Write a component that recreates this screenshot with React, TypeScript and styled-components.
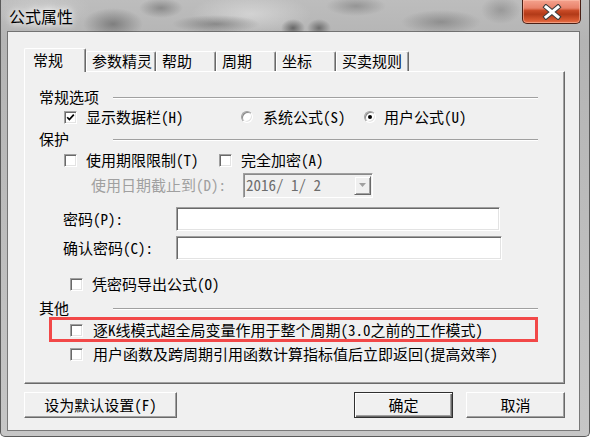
import styled, { createGlobalStyle } from "styled-components";

const FONT = `"Noto Sans Mono CJK SC", "Noto Sans CJK SC", sans-serif`;

const GlobalStyle = createGlobalStyle`
  html, body {
    margin: 0;
    padding: 0;
  }
  body {
    width: 590px;
    height: 437px;
    overflow: hidden;
    background: #fff;
  }
`;

// aero style glass frame round the dialog
const Window = styled.div`
  width: 590px;
  height: 437px;
  box-sizing: border-box;
  display: flex;
  flex-direction: column;
  padding: 0 10px 6px 7px;
  font-family: ${FONT};
  font-size: 15px;
  color: #000;
  border: 1px solid #5a5a5a;
  border-top: none;
  border-radius: 0 0 5px 5px;
  background:
    radial-gradient(ellipse 30px 16px at 112px 24px, rgba(70, 70, 70, 0.5), transparent),
    radial-gradient(ellipse 22px 10px at 160px 8px, rgba(80, 80, 80, 0.45), transparent),
    radial-gradient(ellipse 44px 9px at 215px 24px, rgba(60, 60, 60, 0.4), transparent),
    radial-gradient(ellipse 12px 9px at 292px 28px, rgba(50, 50, 50, 0.6), transparent),
    radial-gradient(ellipse 12px 9px at 318px 28px, rgba(50, 50, 50, 0.55), transparent),
    radial-gradient(ellipse 30px 10px at 355px 6px, rgba(90, 90, 90, 0.4), transparent),
    radial-gradient(ellipse 40px 12px at 440px 22px, rgba(80, 80, 80, 0.4), transparent),
    radial-gradient(ellipse 20px 14px at 500px 10px, rgba(90, 90, 90, 0.35), transparent),
    radial-gradient(ellipse 60px 20px at 250px 14px, rgba(235, 235, 235, 0.5), transparent),
    radial-gradient(ellipse 50px 20px at 40px 10px, rgba(225, 225, 225, 0.4), transparent),
    linear-gradient(#bdbdbd, #b4b4b4 40px, #c6c6c6);
`;

const TitleBar = styled.div`
  height: 32px;
  flex: none;
  display: flex;
  justify-content: space-between;
  align-items: flex-start;
`;

const Title = styled.div`
  margin: 6px 0 0 1px;
  font-family: "Noto Sans CJK SC", sans-serif;
  font-size: 16px;
  line-height: 20px;
  text-shadow: 0 0 6px #fff, 0 0 10px rgba(255, 255, 255, 0.9);
`;

const CloseButton = styled.div`
  width: 59px;
  height: 24px;
  margin-right: -2px;
  box-sizing: border-box;
  display: flex;
  align-items: center;
  justify-content: center;
  border: 1px solid #4a2016;
  border-top: none;
  border-radius: 0 0 5px 5px;
  background: linear-gradient(#f4a28e 0%, #e8826a 35%, #c84a26 46%, #b23a18 62%, #d4562e 85%, #e8724a 100%);
  box-shadow: inset 0 0 0 1px rgba(255, 200, 180, 0.5);
`;

const Client = styled.div`
  flex: 1;
  display: flex;
  flex-direction: column;
  padding: 16px 14px 0 16px;
  background: #f0f0f0;
  box-shadow: 0 0 0 1px rgba(70, 70, 70, 0.6);
`;

const TabStrip = styled.div`
  height: 23px;
  display: flex;
  align-items: flex-end;
  position: relative;
  z-index: 1;
`;

const Tab = styled.div<{ $w: number; $active?: boolean }>`
  width: ${p => p.$w}px;
  height: ${p => (p.$active ? 24 : 20)}px;
  margin-bottom: ${p => (p.$active ? -1 : 0)}px;
  box-sizing: border-box;
  padding: ${p => (p.$active ? "3px 0 0 8px" : "1px 0 0 5px")};
  line-height: 16px;
  white-space: nowrap;
  background: #f0f0f0;
  border-top: 1px solid #fff;
  border-left: 1px solid #fff;
  border-right: 1px solid #696969;
  border-radius: 2px 2px 0 0;
  box-shadow: inset -1px 0 #a0a0a0;
`;

const Panel = styled.div`
  height: 313px;
  box-sizing: border-box;
  position: relative;
  display: flex;
  flex-direction: column;
  padding-top: 17px;
  border: 1px solid;
  border-color: #fff #696969 #696969 #fff;
  box-shadow: inset -1px -1px #a0a0a0;
`;

const GroupHeader = styled.div<{ $mt: number }>`
  display: grid;
  grid-template-columns: 74px 1fr;
  align-items: center;
  height: 16px;
  line-height: 16px;
  margin: ${p => p.$mt}px 26px 0 14px;
`;

const Etch = styled.div`
  height: 0;
  margin-top: 2px;
  border-top: 1px solid #a0a0a0;
  border-bottom: 1px solid #fff;
`;

const Row = styled.div<{ $mt: number; $pl: number; $h?: number }>`
  display: flex;
  align-items: center;
  height: ${p => p.$h ?? 16}px;
  margin-top: ${p => p.$mt}px;
  padding-left: ${p => p.$pl}px;
  line-height: 16px;
  white-space: nowrap;
`;

const Option = styled.div<{ $w?: number; $gap?: number; $disabled?: boolean }>`
  display: flex;
  align-items: center;
  gap: ${p => p.$gap ?? 9}px;
  width: ${p => (p.$w ? `${p.$w}px` : "auto")};
  flex: none;
  color: ${p => (p.$disabled ? "#a0a0a0" : "#000")};
`;

const CheckBox = styled.span`
  width: 13px;
  height: 13px;
  flex: none;
  box-sizing: border-box;
  display: flex;
  align-items: center;
  justify-content: center;
  background: #fff;
  border: 1px solid;
  border-color: #a0a0a0 #fff #fff #a0a0a0;
  box-shadow: inset 1px 1px #696969, inset -1px -1px #e3e3e3;
`;

const RadioDot = styled.span<{ $on?: boolean }>`
  width: 12px;
  height: 12px;
  flex: none;
  box-sizing: border-box;
  border-radius: 50%;
  display: flex;
  align-items: center;
  justify-content: center;
  background: #fff;
  border: 1px solid;
  border-color: #a0a0a0 #fff #fff #a0a0a0;
  box-shadow: inset 1px 1px #8a8a8a, inset -1px -1px #e3e3e3;
  &::after {
    content: "";
    width: 4px;
    height: 4px;
    border-radius: 50%;
    background: ${p => (p.$on ? "#000" : "transparent")};
  }
`;

const Label = styled.span<{ $w: number; $disabled?: boolean }>`
  width: ${p => p.$w}px;
  flex: none;
  color: ${p => (p.$disabled ? "#a0a0a0" : "#000")};
`;

const Combo = styled.div`
  width: 130px;
  height: 25px;
  box-sizing: border-box;
  display: flex;
  align-items: center;
  justify-content: space-between;
  padding: 1px 1px 1px 2px;
  background: #f0f0f0;
  border: 1px solid;
  border-color: #a0a0a0 #fff #fff #a0a0a0;
  box-shadow: inset 1px 1px #8a8a8a;
  color: #6d6d6d;
  font-size: 15px;
`;

const DropButton = styled.div`
  width: 17px;
  height: 19px;
  box-sizing: border-box;
  display: flex;
  align-items: center;
  justify-content: center;
  border: 1px solid;
  border-color: #f0f0f0 #696969 #696969 #f0f0f0;
  box-shadow: inset 1px 1px #fff, inset -1px -1px #a0a0a0;
`;

const TextInput = styled.div<{ $w: number }>`
  width: ${p => p.$w}px;
  height: 24px;
  box-sizing: border-box;
  background: #fff;
  border: 1px solid;
  border-color: #a0a0a0 #fff #fff #a0a0a0;
  box-shadow: inset 1px 1px #696969, inset -1px -1px #e3e3e3;
`;

// red annotation frame drawn over the panel
const Highlight = styled.div`
  position: absolute;
  left: 24px;
  top: 245px;
  width: 489px;
  height: 25px;
  box-sizing: border-box;
  border: 3px solid #f24848;
  pointer-events: none;
`;

const ButtonBar = styled.div`
  height: 26px;
  margin-top: 8px;
  display: flex;
  justify-content: space-between;
`;

const ButtonGroup = styled.div`
  display: flex;
  gap: 13px;
`;

const Button = styled.div<{ $w: number; $default?: boolean }>`
  width: ${p => p.$w}px;
  height: 26px;
  box-sizing: border-box;
  display: flex;
  align-items: center;
  justify-content: center;
  line-height: 16px;
  background: #f0f0f0;
  border: 1px solid;
  border-color: ${p => (p.$default ? "#303030" : "#fff #696969 #696969 #fff")};
  box-shadow: ${p =>
    p.$default
      ? "inset 1px 1px #fff, inset -1px -1px #696969, inset -2px -2px #a0a0a0"
      : "inset -1px -1px #a0a0a0"};
`;

const Check = ({ checked }: { checked?: boolean }) => (
  <CheckBox>
    {checked && (
      <svg width="9" height="9" viewBox="0 0 9 9">
        <path d="M1.2 4.2 L3.4 6.6 L7.8 1.6" stroke="#000" strokeWidth="1.7" fill="none" />
      </svg>
    )}
  </CheckBox>
);

const tabs = [
  { name: "常规", w: 62 },
  { name: "参数精灵", w: 70 },
  { name: "帮助", w: 60 },
  { name: "周期", w: 60 },
  { name: "坐标", w: 60 },
  { name: "买卖规则", w: 73 },
];

export default function App() {
  return (
    <>
      <GlobalStyle />
      <Window>
        <TitleBar>
          <Title>公式属性</Title>
          <CloseButton>
            <svg width="22" height="16" viewBox="0 0 22 16">
              <path d="M5 3 L17 13 M17 3 L5 13" stroke="#3c3c3c" strokeWidth="5" strokeLinecap="square" fill="none" />
              <path d="M5 3 L17 13 M17 3 L5 13" stroke="#fff" strokeWidth="3" strokeLinecap="square" fill="none" />
            </svg>
          </CloseButton>
        </TitleBar>
        <Client>
          <TabStrip>
            {tabs.map((t, i) => (
              <Tab key={t.name} $w={t.w} $active={i === 0}>
                {t.name}
              </Tab>
            ))}
          </TabStrip>
          <Panel>
            <GroupHeader $mt={0}>
              <span>常规选项</span>
              <Etch />
            </GroupHeader>
            <Row $mt={4} $pl={39}>
              <Option $w={177}>
                <Check checked />
                显示数据栏(H)
              </Option>
              <Option $w={123} $gap={10}>
                <RadioDot />
                系统公式(S)
              </Option>
              <Option $gap={8}>
                <RadioDot $on />
                用户公式(U)
              </Option>
            </Row>
            <GroupHeader $mt={6}>
              <span>保护</span>
              <Etch />
            </GroupHeader>
            <Row $mt={5} $pl={39}>
              <Option $w={155}>
                <Check />
                使用期限限制(T)
              </Option>
              <Option>
                <Check />
                完全加密(A)
              </Option>
            </Row>
            <Row $mt={5} $pl={66} $h={24}>
              <Label $w={152} $disabled>使用日期截止到(D):</Label>
              <Combo>
                <span>2016/ 1/ 2</span>
                <DropButton>
                  <svg width="7" height="4" viewBox="0 0 7 4">
                    <path d="M0 0 H7 L3.5 4 Z" fill="#a0a0a0" />
                  </svg>
                </DropButton>
              </Combo>
            </Row>
            <Row $mt={10} $pl={38} $h={24}>
              <Label $w={113}>密码(P):</Label>
              <TextInput $w={324} />
            </Row>
            <Row $mt={5} $pl={38} $h={24}>
              <Label $w={113}>确认密码(C):</Label>
              <TextInput $w={326} />
            </Row>
            <Row $mt={16} $pl={45}>
              <Option>
                <Check />
                凭密码导出公式(O)
              </Option>
            </Row>
            <GroupHeader $mt={8}>
              <span>其他</span>
              <Etch />
            </GroupHeader>
            <Row $mt={6} $pl={45}>
              <Option $gap={10}>
                <Check />
                逐K线模式超全局变量作用于整个周期(3.0之前的工作模式)
              </Option>
            </Row>
            <Row $mt={8} $pl={45}>
              <Option $gap={10}>
                <Check />
                用户函数及跨周期引用函数计算指标值后立即返回(提高效率)
              </Option>
            </Row>
            <Highlight />
          </Panel>
          <ButtonBar>
            <Button $w={153}>设为默认设置(F)</Button>
            <ButtonGroup>
              <Button $w={99} $default>确定</Button>
              <Button $w={99}>取消</Button>
            </ButtonGroup>
          </ButtonBar>
        </Client>
      </Window>
    </>
  );
}
